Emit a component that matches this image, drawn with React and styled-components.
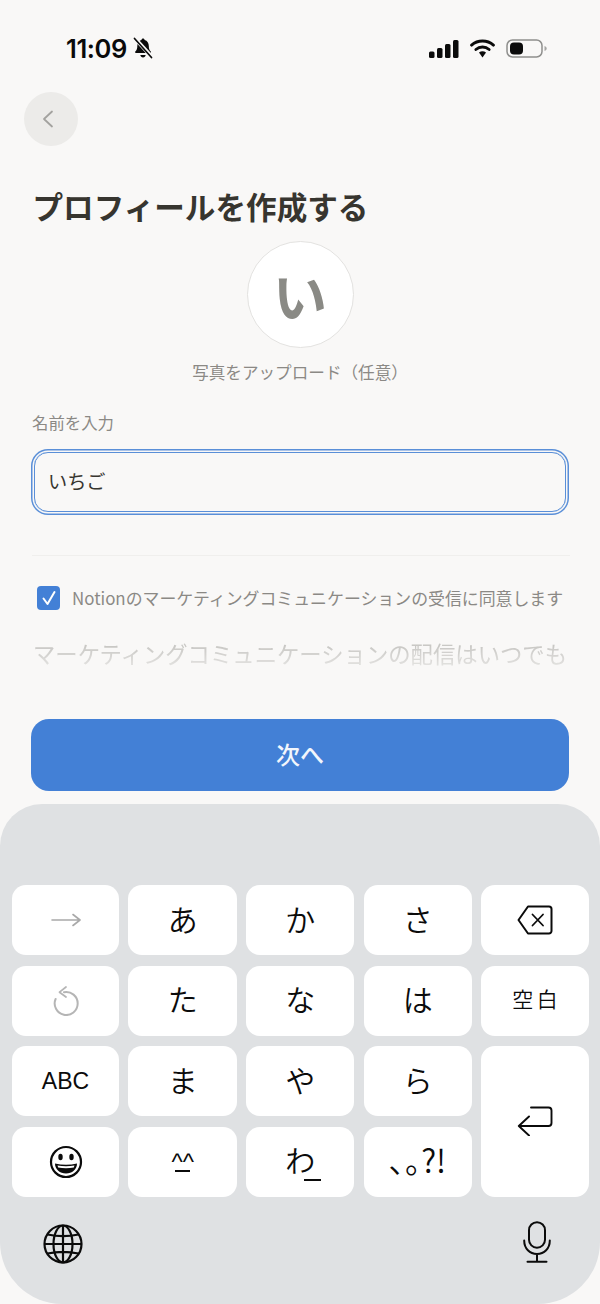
import React from 'react';
import styled, { createGlobalStyle } from 'styled-components';

const GlobalStyle = createGlobalStyle`
  html, body {
    margin: 0;
    padding: 0;
    background: #f9f8f7;
  }
  * {
    box-sizing: border-box;
  }
`;

const JP = `"Noto Sans CJK JP", "Noto Sans", sans-serif`;

const Page = styled.div`
  width: 600px;
  height: 1304px;
  overflow: hidden;
  display: flex;
  flex-direction: column;
  background: #f9f8f7;
  font-family: ${JP};
`;

const StatusBar = styled.div`
  height: 92px;
  padding: 32px 52px 0 66px;
  display: flex;
  justify-content: space-between;
  align-items: flex-start;
`;

const TimeGroup = styled.div`
  display: flex;
  align-items: center;
  gap: 6px;
  height: 32px;
`;

const Time = styled.span`
  font-family: Inter, "Liberation Sans", sans-serif;
  font-size: 25.5px;
  font-weight: 600;
  letter-spacing: -0.4px;
  color: #0a0a0a;
`;

const StatusIcons = styled.div`
  display: flex;
  align-items: center;
  gap: 11px;
  height: 33px;
`;

const BackButton = styled.button`
  width: 54px;
  height: 54px;
  margin-left: 24px;
  padding: 0 6px 0 0;
  border: 0;
  border-radius: 50%;
  background: #ecebe9;
  display: flex;
  align-items: center;
  justify-content: center;
`;

const Title = styled.h1`
  margin: 38px 0 0 32.5px;
  font-size: 30.6px;
  line-height: 44px;
  font-weight: 700;
  color: #37352f;
  white-space: nowrap;
`;

const AvatarColumn = styled.div`
  display: flex;
  flex-direction: column;
  align-items: center;
  margin-top: 13px;
`;

const Avatar = styled.div`
  width: 107px;
  height: 107px;
  border-radius: 50%;
  background: #fff;
  border: 1px solid #e3e2e0;
  display: flex;
  align-items: center;
  justify-content: center;
  font-size: 54px;
  font-weight: 700;
  color: #8a8a85;
`;

const Caption = styled.div`
  margin-top: 12px;
  font-size: 16.6px;
  line-height: 24px;
  color: #8b8985;
`;

const Field = styled.div`
  margin: 26px 32px 0;
`;

const Label = styled.label`
  display: block;
  font-size: 16.4px;
  line-height: 24px;
  color: #8b8985;
`;

const InputBox = styled.div`
  margin: 17.5px 2px 0;
  height: 60.5px;
  padding: 0 13px 2px;
  display: flex;
  align-items: center;
  border: 1.5px solid #5a8fd8;
  border-radius: 14px;
  box-shadow: 0 0 0 1.5px #f9f8f7, 0 0 0 3px #5a8fd8;
  font-size: 19.2px;
  color: #37352f;
`;

const Divider = styled.div`
  height: 1px;
  margin: 43px 30px 0 32px;
  background: #f0efed;
`;

const ConsentRow = styled.div`
  display: flex;
  align-items: center;
  gap: 12px;
  margin: 30px 0 0 37px;
`;

const CheckBox = styled.div`
  width: 23px;
  height: 24px;
  border-radius: 4px;
  background: #4380d6;
  display: flex;
  align-items: center;
  justify-content: center;
`;

const ConsentText = styled.span`
  font-size: 16.9px;
  line-height: 24px;
  color: #8b8985;
  white-space: nowrap;
`;

const FadedNote = styled.div`
  margin: 26px 0 0 33px;
  height: 34px;
  overflow: hidden;
  font-size: 22.35px;
  line-height: 34px;
  white-space: nowrap;
  color: #c9c8c5;
  -webkit-mask-image: linear-gradient(to bottom, #000 30%, rgba(0, 0, 0, 0.45) 90%);
  mask-image: linear-gradient(to bottom, #000 30%, rgba(0, 0, 0, 0.45) 90%);
`;

const NextButton = styled.button`
  margin: 49px 31px 0;
  height: 72px;
  padding: 0 0 3px;
  border: 0;
  border-radius: 18px;
  background: #4380d6;
  color: #f2f6fc;
  font-family: ${JP};
  font-size: 24px;
  font-weight: 500;
`;

const Keyboard = styled.div`
  margin-top: 13px;
  flex: 1;
  background: #dfe1e3;
  border-radius: 42px 42px 62px 62px;
  padding: 81px 11px 0 12px;
`;

const KeyGrid = styled.div`
  display: grid;
  grid-template-columns: 107px 108.5px 108px 108px 108px;
  grid-template-rows: repeat(4, 70px);
  column-gap: 9.4px;
  row-gap: 10.6px;
`;

const Key = styled.div`
  grid-row: ${(p) => (p.$tall ? 'span 2' : 'auto')};
  background: #fff;
  border-radius: 14px;
  display: flex;
  align-items: center;
  justify-content: center;
  padding-left: ${(p) => p.$spacing || 0}px;
  color: #0b0b0b;
  font-family: ${JP};
  font-size: ${(p) => p.$size || 30}px;
  font-weight: 350;
  letter-spacing: ${(p) => p.$spacing || 0}px;
  line-height: 1;
  white-space: nowrap;
`;

const KanaKey = styled(Key)`
  padding-bottom: 5px;
`;

const KeyLatin = styled.span`
  font-family: "Liberation Sans", sans-serif;
  font-weight: 400;
`;

const Kaomoji = styled.div`
  display: flex;
  flex-direction: column;
  align-items: center;
`;

const Carets = styled.span`
  font-family: "Liberation Sans", sans-serif;
  font-size: 24px;
  font-weight: 400;
  line-height: 20px;
  height: 14px;
`;

const Mouth = styled.div`
  width: 15px;
  height: 2px;
  margin-top: 4px;
  background: #0b0b0b;
`;

const TailKana = styled.span`
  position: relative;
  display: inline-block;
`;

const TailMark = styled.span`
  position: absolute;
  right: -6px;
  bottom: -6.5px;
  width: 17px;
  height: 1.5px;
  background: #0b0b0b;
`;

const KeyboardFooter = styled.div`
  display: flex;
  justify-content: space-between;
  align-items: center;
  padding: 24px 38px 0 31px;
`;

const MicSlot = styled.div`
  display: flex;
  margin-bottom: 4px;
`;

const Ink = '#0b0b0b';

const BellOff = () => (
  <svg width="20" height="22" viewBox="0 0 20 22">
    <path d="M10 1.500c.9 0 1.500.6 1.600 1.400 2.800.7 4.200 3 4.200 6 0 2.600.6 4.200 2 5.600.5.6.2 1.500-.7 1.500H3c-.9 0-1.200-.9-.7-1.500 1.400-1.400 2-3 2-5.600 0-3 1.400-5.300 4.200-6 .1-.8.7-1.400 1.500-1.400Z" fill={Ink} />
    <path d="M7.300 18h5.400c-.2 1.400-1.300 2.400-2.700 2.400S7.500 19.400 7.300 18Z" fill={Ink} />
    <path d="M2 1.500 19 20" stroke="#f9f8f7" strokeWidth="4" />
    <path d="M1.500 1.500 18.500 20.500" stroke={Ink} strokeWidth="1.700" strokeLinecap="round" />
  </svg>
);

const SignalIcon = () => (
  <svg width="30" height="18" viewBox="0 0 30 18">
    <rect x="0" y="11.500" width="5.500" height="6.500" rx="1.500" fill={Ink} />
    <rect x="8" y="8" width="5.500" height="10" rx="1.500" fill={Ink} />
    <rect x="16" y="4" width="5.500" height="14" rx="1.500" fill={Ink} />
    <rect x="24" y="0" width="5.500" height="18" rx="1.500" fill={Ink} />
  </svg>
);

const WifiIcon = () => (
  <svg width="25" height="19" viewBox="0 0 26 20">
    <path d="M1.500 6.500C8 .7 18 .7 24.500 6.500" fill="none" stroke={Ink} strokeWidth="3" strokeLinecap="round" />
    <path d="M6 11c4-3.500 10-3.500 14 0" fill="none" stroke={Ink} strokeWidth="3" strokeLinecap="round" />
    <path d="M9.300 14.300c2.200-1.700 5.200-1.700 7.400 0L13 19.500Z" fill={Ink} />
  </svg>
);

const BatteryIcon = () => (
  <svg width="42" height="19" viewBox="0 0 42 19">
    <rect x="1" y="1" width="35" height="17" rx="5.500" fill="none" stroke="#8f8f8d" strokeWidth="1.500" />
    <rect x="4" y="3.500" width="13" height="12" rx="4" fill={Ink} />
    <path d="M38.500 7c1.400.4 2.200 1.300 2.200 2.500s-.8 2.100-2.200 2.500Z" fill="#a5a5a3" />
  </svg>
);

const ChevronLeft = () => (
  <svg width="12" height="18" viewBox="0 0 12 18">
    <path d="M10 1.500 2 9l8 7.500" fill="none" stroke="#a3a29f" strokeWidth="1.800" strokeLinecap="round" strokeLinejoin="round" />
  </svg>
);

const CheckMark = () => (
  <svg width="16" height="16" viewBox="0 0 16 16">
    <path d="M2.500 8.500 6.500 14 13.500 2" fill="none" stroke="#fff" strokeWidth="2" strokeLinecap="round" strokeLinejoin="round" />
  </svg>
);

const ArrowRight = () => (
  <svg width="30" height="16" viewBox="0 0 30 16">
    <path d="M1 8h28M22 2.500 29 8l-7 5.500" fill="none" stroke="#a9a9a9" strokeWidth="1.600" strokeLinecap="round" strokeLinejoin="round" />
  </svg>
);

const DeleteIcon = () => (
  <svg width="36" height="30" viewBox="0 0 36 30">
    <path d="M11 1.500h21a2.500 2.500 0 0 1 2.500 2.500v22a2.500 2.500 0 0 1-2.500 2.500H11L1.500 15Z" fill="none" stroke={Ink} strokeWidth="2" strokeLinejoin="round" />
    <path d="M15.500 9.500 26 20.500M26 9.500 15.500 20.500" fill="none" stroke={Ink} strokeWidth="1.800" strokeLinecap="round" />
  </svg>
);

const UndoIcon = () => (
  <svg width="26" height="30" viewBox="0 0 26 30">
    <path d="M11 6.200A11.500 11.500 0 1 1 2.600 13" fill="none" stroke="#b5b5b5" strokeWidth="2" strokeLinecap="round" />
    <path d="M13 1 6.500 6.200 13 11" fill="none" stroke="#b5b5b5" strokeWidth="1.700" strokeLinecap="round" strokeLinejoin="round" />
  </svg>
);

const ReturnIcon = () => (
  <svg width="36" height="30" viewBox="0 0 36 30">
    <path d="M14 1.500h17.500a3 3 0 0 1 3 3v12.500a3 3 0 0 1-3 3H2M12 29.500 1.800 20 12 10.500" fill="none" stroke={Ink} strokeWidth="1.900" strokeLinecap="round" strokeLinejoin="round" />
  </svg>
);

const EmojiIcon = () => (
  <svg width="34" height="34" viewBox="0 0 34 34">
    <circle cx="17" cy="17" r="15" fill="none" stroke={Ink} strokeWidth="2.200" />
    <ellipse cx="11.500" cy="12" rx="2.200" ry="3.200" fill={Ink} />
    <ellipse cx="22.500" cy="12" rx="2.200" ry="3.200" fill={Ink} />
    <path d="M6 18.500c7 1.600 15 1.600 22 0 0 6-5 10-11 10S6 24.500 6 18.500Z" fill={Ink} />
    <path d="M8.500 20.500c5.500 1 11.500 1 17 0l-.7 2c-5 .9-10.600.9-15.600 0Z" fill="#fff" />
  </svg>
);

const GlobeIcon = () => (
  <svg width="40" height="40" viewBox="0 0 40 40">
    <g fill="none" stroke={Ink} strokeWidth="2.200">
      <circle cx="20" cy="20" r="18.500" />
      <ellipse cx="20" cy="20" rx="9.500" ry="18.500" />
      <path d="M20 1.500v37M1.500 20h37M4.500 10.500c9 2 22 2 31 0M4.500 29.500c9-2 22-2 31 0" />
    </g>
  </svg>
);

const MicIcon = () => (
  <svg width="28" height="42" viewBox="0 0 28 42">
    <g fill="none" stroke={Ink} strokeWidth="2" strokeLinecap="round">
      <rect x="6" y="1.200" width="16" height="25.500" rx="8" />
      <path d="M1.200 19.500c0 8 5.500 13.500 12.800 13.500s12.800-5.500 12.800-13.500M14 33v7.500M4.500 40.800h19" />
    </g>
  </svg>
);

const App = () => (
  <Page>
    <GlobalStyle />
    <StatusBar>
      <TimeGroup>
        <Time>11:09</Time>
        <BellOff />
      </TimeGroup>
      <StatusIcons>
        <SignalIcon />
        <WifiIcon />
        <BatteryIcon />
      </StatusIcons>
    </StatusBar>

    <BackButton aria-label="戻る">
      <ChevronLeft />
    </BackButton>

    <Title>プロフィールを作成する</Title>

    <AvatarColumn>
      <Avatar>い</Avatar>
      <Caption>写真をアップロード（任意）</Caption>
    </AvatarColumn>

    <Field>
      <Label>名前を入力</Label>
      <InputBox>いちご</InputBox>
    </Field>

    <Divider />

    <ConsentRow>
      <CheckBox>
        <CheckMark />
      </CheckBox>
      <ConsentText>Notionのマーケティングコミュニケーションの受信に同意します</ConsentText>
    </ConsentRow>

    <FadedNote>マーケティングコミュニケーションの配信はいつでも</FadedNote>

    <NextButton>次へ</NextButton>

    <Keyboard>
      <KeyGrid>
        <Key><ArrowRight /></Key>
        <KanaKey>あ</KanaKey>
        <KanaKey>か</KanaKey>
        <KanaKey>さ</KanaKey>
        <Key><DeleteIcon /></Key>

        <Key><UndoIcon /></Key>
        <KanaKey>た</KanaKey>
        <KanaKey>な</KanaKey>
        <KanaKey>は</KanaKey>
        <KanaKey $size={21} $spacing={3.500}>空白</KanaKey>

        <Key $size={23}><KeyLatin>ABC</KeyLatin></Key>
        <KanaKey>ま</KanaKey>
        <KanaKey>や</KanaKey>
        <KanaKey>ら</KanaKey>
        <Key $tall><ReturnIcon /></Key>

        <Key><EmojiIcon /></Key>
        <Key><Kaomoji><Carets>^^</Carets><Mouth /></Kaomoji></Key>
        <KanaKey><TailKana>わ<TailMark /></TailKana></KanaKey>
        <KanaKey $size={32}>､｡?!</KanaKey>
      </KeyGrid>
      <KeyboardFooter>
        <GlobeIcon />
        <MicSlot>
          <MicIcon />
        </MicSlot>
      </KeyboardFooter>
    </Keyboard>
  </Page>
);

export default App;
